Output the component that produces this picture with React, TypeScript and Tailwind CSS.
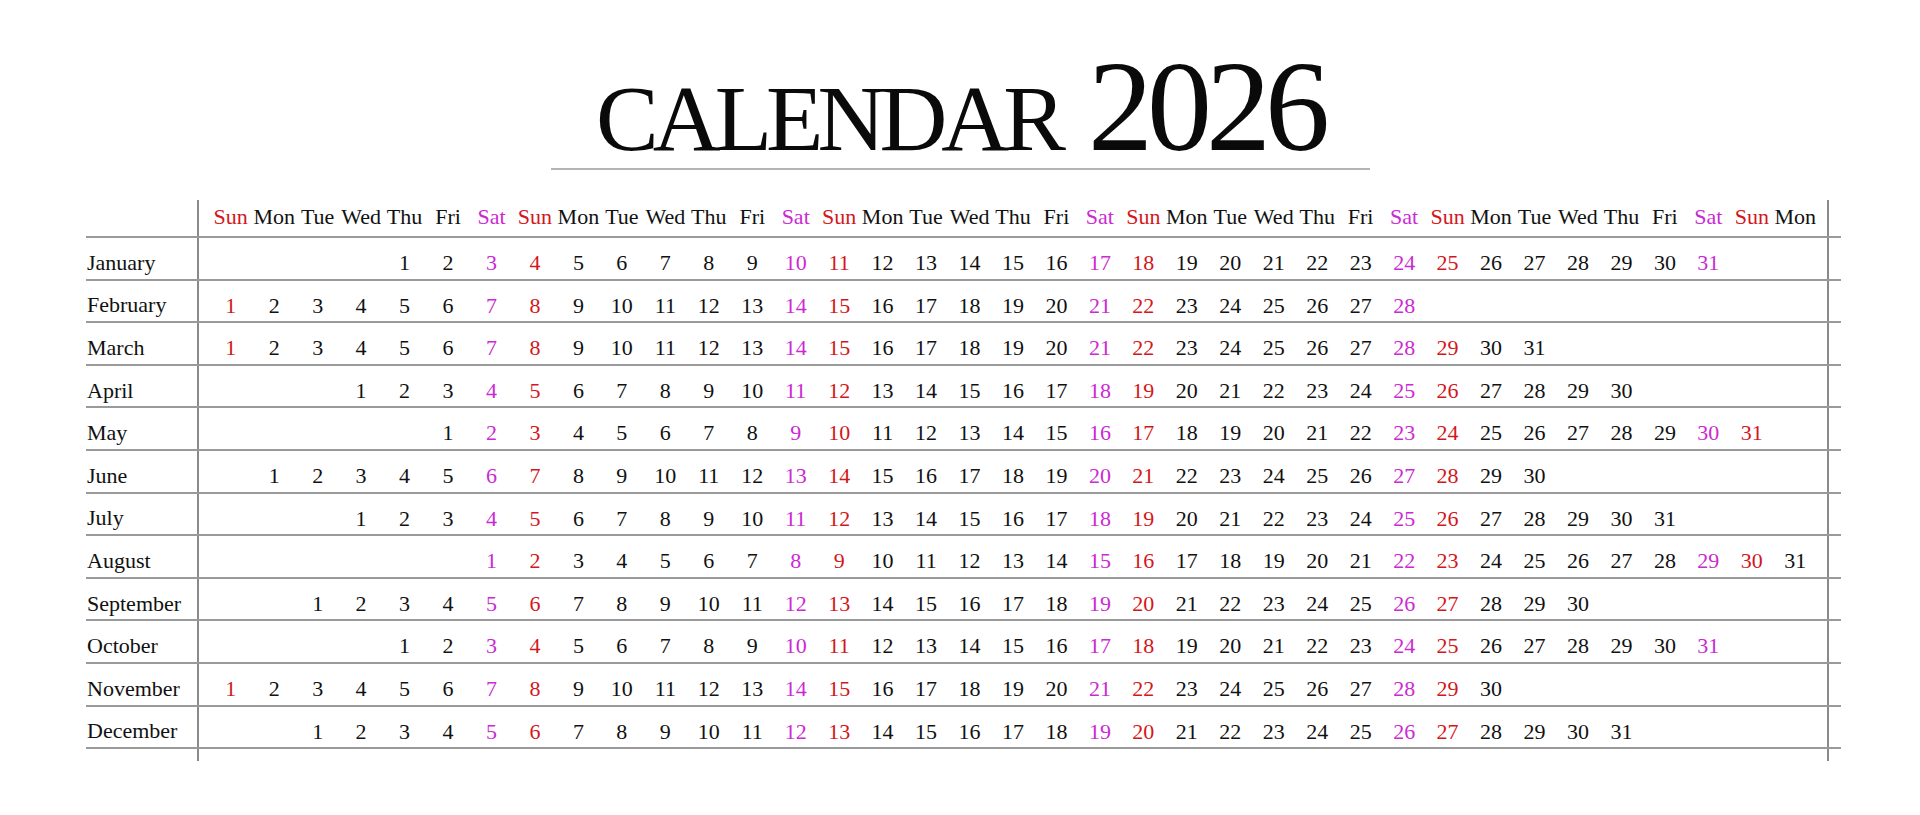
const MONTHS = [
  "January",
  "February",
  "March",
  "April",
  "May",
  "June",
  "July",
  "August",
  "September",
  "October",
  "November",
  "December",
];

const DAYS = ["Sun", "Mon", "Tue", "Wed", "Thu", "Fri", "Sat"];
const COLS = 37;

function dayColor(col: number) {
  const d = col % 7;
  if (d === 0) return "text-[#d3171c]";
  if (d === 6) return "text-[#cb2ad3]";
  return "text-[#111111]";
}

function MonthRow({ month, index }: { month: string; index: number }) {
  const first = new Date(2026, index, 1).getDay();
  const total = new Date(2026, index + 1, 0).getDate();
  const cells = Array.from({ length: COLS }, (_, col) => {
    const day = col - first + 1;
    return day >= 1 && day <= total ? day : null;
  });

  return (
    <div className="flex h-[42.6px] border-b-2 border-[#9a9a9a]">
      <div className="w-[111px] flex items-center pt-[8px] pl-[1px] text-[#111111]">
        {month}
      </div>
      <div className="w-[1632px] border-x-2 border-[#8a8a8a] px-[10px] grid grid-cols-[repeat(37,minmax(0,1fr))]">
        {cells.map((d, col) => (
          <div
            key={col}
            className={`flex items-center justify-center pt-[8px] ${dayColor(col)}`}
          >
            {d}
          </div>
        ))}
      </div>
      <div className="w-[12px]" />
    </div>
  );
}

export default function App() {
  return (
    <main
      className="w-full h-[815px] bg-white overflow-hidden text-[22px]"
      style={{ fontFamily: '"Liberation Serif", serif' }}
    >
      <section className="h-[168px] pt-[41px] flex items-baseline justify-center gap-[28px] text-[#0a0a0a]">
        <h1 className="text-[94px] leading-none tracking-[-6px]">CALENDAR</h1>
        <span className="text-[130px] leading-none tracking-[-6px]">2026</span>
      </section>
      <div className="mx-auto w-[819px] h-[2px] bg-[#b4b4b4]" />

      <section className="mt-[30px] ml-[86px] w-[1755px]">
        <div className="flex h-[38px] border-b-2 border-[#9a9a9a]">
          <div className="w-[111px]" />
          <div className="w-[1632px] border-x-2 border-[#8a8a8a] px-[10px] grid grid-cols-[repeat(37,minmax(0,1fr))]">
            {Array.from({ length: COLS }, (_, col) => (
              <div
                key={col}
                className={`flex items-center justify-center pb-[7px] whitespace-nowrap ${dayColor(col)}`}
              >
                {DAYS[col % 7]}
              </div>
            ))}
          </div>
          <div className="w-[12px]" />
        </div>

        {MONTHS.map((m, i) => (
          <MonthRow key={m} month={m} index={i} />
        ))}

        <div className="flex h-[12px]">
          <div className="w-[111px]" />
          <div className="w-[1632px] border-x-2 border-[#8a8a8a]" />
        </div>
      </section>
    </main>
  );
}
